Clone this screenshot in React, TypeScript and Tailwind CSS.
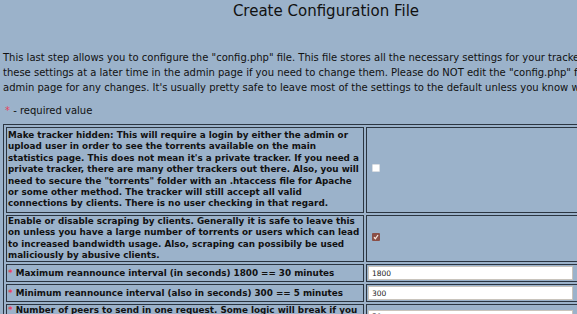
import { ReactNode } from 'react'

const Req = () => <span className="text-[#e8425e]">*</span>

const Row = ({ label, children }: { label: ReactNode; children: ReactNode }) => (
  <tr>
    <td className="w-[358px] border border-[#2b3541] px-px py-0 align-middle font-bold">{label}</td>
    <td className="border border-[#2b3541] px-px py-0 align-middle">{children}</td>
  </tr>
)

const Box = ({ checked }: { checked?: boolean }) =>
  checked ? (
    <span className="mb-[4px] ml-1 flex h-[8px] w-[8px] items-center justify-center rounded-[1px] bg-[#8a4f47]">
      <svg width="6" height="6" viewBox="0 0 6 6">
        <path d="M1 3.2 L2.4 4.8 L5 1" stroke="#f7e9df" strokeWidth="1.3" fill="none" />
      </svg>
    </span>
  ) : (
    <span className="mb-[4px] ml-1 block h-[8px] w-[8px] rounded-[1px] border border-[#d9dde2] bg-white" />
  )

const Field = ({ value }: { value: string }) => (
  <div className="my-px flex h-[14px] w-[205px] items-center border border-[#c9c4bc] bg-white pl-[3px] text-[7.5px] text-[#222]">
    {value}
  </div>
)

export default function App() {
  return (
    <div className="h-[314px] w-[577px] overflow-hidden bg-[#9bb2ca]">
      <div
        className="w-[652px] text-[#111]"
        style={{ fontFamily: '"DejaVu Sans", Verdana, sans-serif' }}
      >
        <h1 className="pt-[2px] text-center text-[15px] font-normal leading-[18px]">Create Configuration File</h1>

        <p className="mt-[30px] whitespace-nowrap pl-[3px] text-[10px] leading-[15px]">
          This last step allows you to configure the "config.php" file. This file stores all the necessary settings for your tracker. You can change
          <br />
          these settings at a later time in the admin page if you need to change them. Please do NOT edit the "config.php" file by hand, use the
          <br />
          admin page for any changes. It's usually pretty safe to leave most of the settings to the default unless you know what you're doing.
        </p>

        <p className="mt-[8px] pl-[5px] text-[10px] leading-[15px]">
          <Req /> - required value
        </p>

        <table className="ml-[3px] mt-[6px] w-[640px] border-separate border-spacing-[2px] border border-[#2b3541] text-[8.8px] leading-[11.4px]">
          <tbody>
            <Row
              label={
                <div className="whitespace-nowrap py-[2px]">
                  Make tracker hidden: This will require a login by either the admin or
                  <br />
                  upload user in order to see the torrents available on the main
                  <br />
                  statistics page. This does not mean it's a private tracker. If you need a
                  <br />
                  private tracker, there are many other trackers out there. Also, you will
                  <br />
                  need to secure the "torrents" folder with an .htaccess file for Apache
                  <br />
                  or some other method. The tracker will still accept all valid
                  <br />
                  connections by clients. There is no user checking in that regard.
                </div>
              }
            >
              <Box />
            </Row>
            <Row
              label={
                <div className="whitespace-nowrap">
                  Enable or disable scraping by clients. Generally it is safe to leave this
                  <br />
                  on unless you have a large number of torrents or users which can lead
                  <br />
                  to increased bandwidth usage. Also, scraping can possibily be used
                  <br />
                  maliciously by abusive clients.
                </div>
              }
            >
              <Box checked />
            </Row>
            <Row
              label={
                <div className="whitespace-nowrap">
                  <Req /> Maximum reannounce interval (in seconds) 1800 == 30 minutes
                </div>
              }
            >
              <Field value="1800" />
            </Row>
            <Row
              label={
                <div className="whitespace-nowrap">
                  <Req /> Minimum reannounce interval (also in seconds) 300 == 5 minutes
                </div>
              }
            >
              <Field value="300" />
            </Row>
            <Row
              label={
                <div className="whitespace-nowrap">
                  <Req /> Number of peers to send in one request. Some logic will break if you
                  <br />
                  set this too low, so it's best left at the default value of 50.
                </div>
              }
            >
              <Field value="50" />
            </Row>
          </tbody>
        </table>
      </div>
    </div>
  )
}
